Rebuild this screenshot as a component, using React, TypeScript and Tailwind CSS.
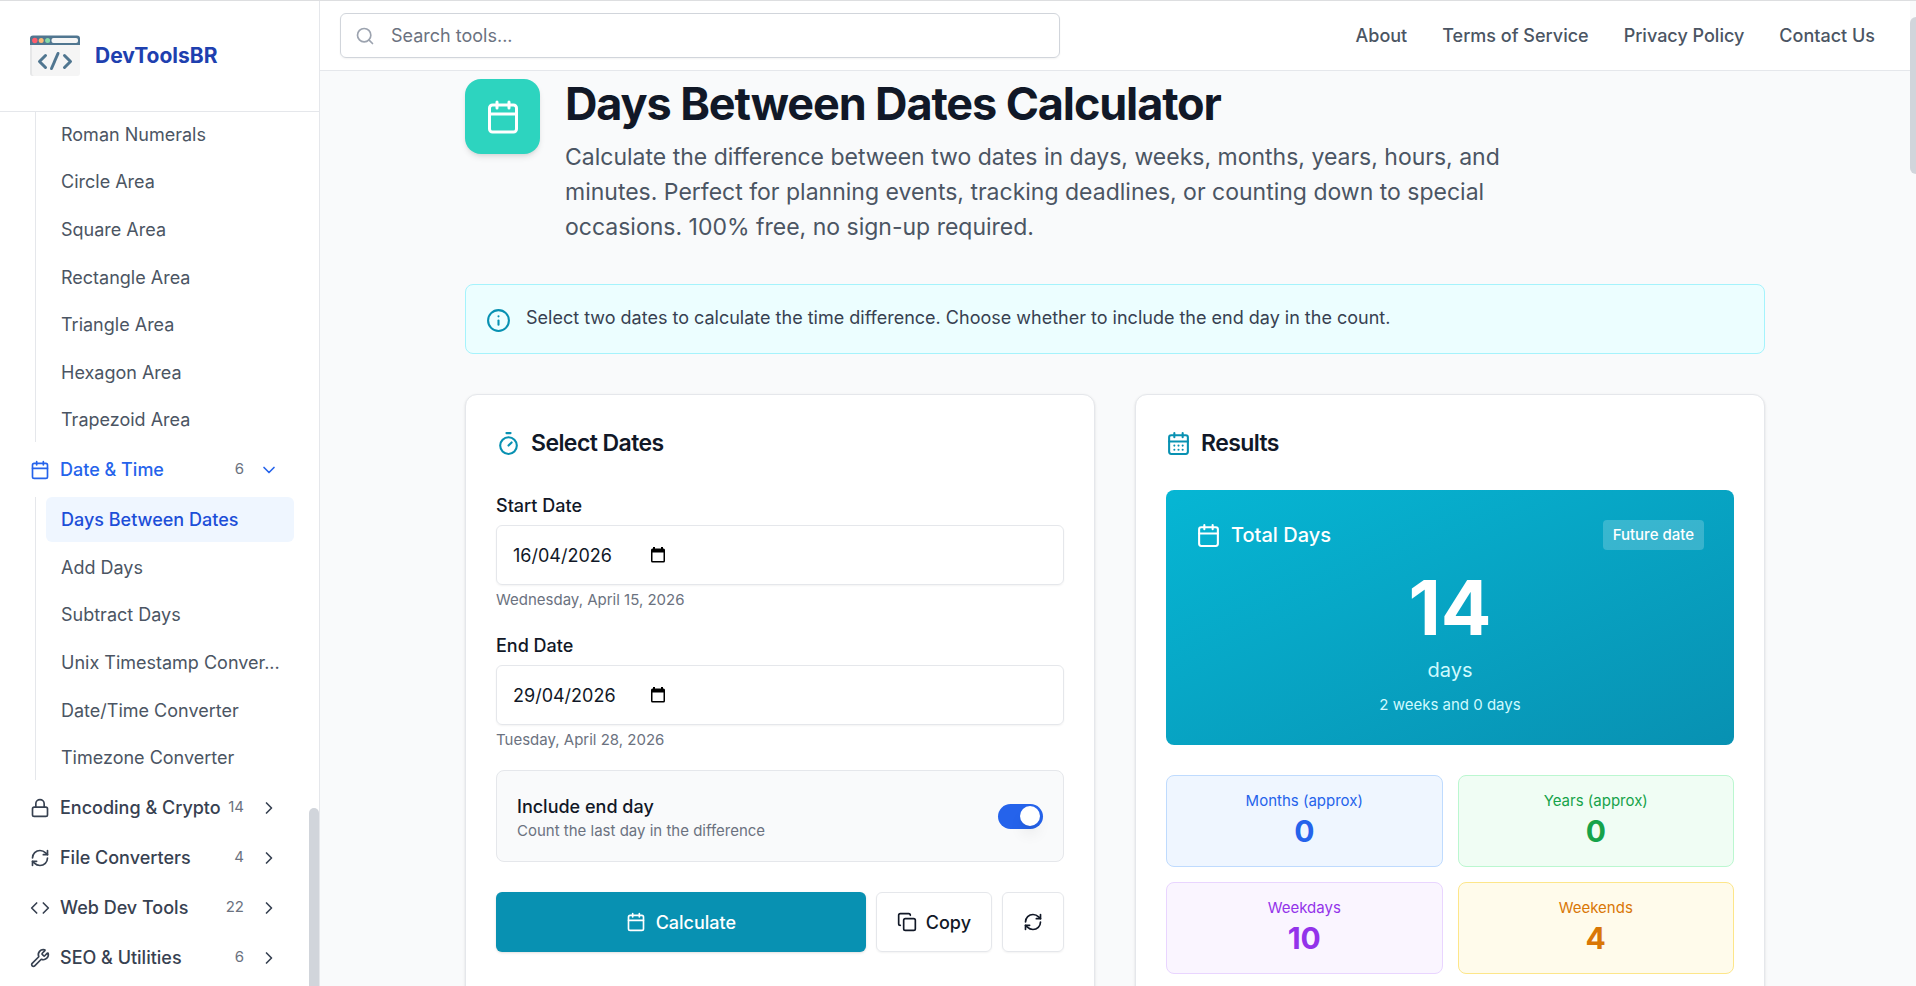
import {
  Calendar,
  CalendarDays,
  ChevronDown,
  ChevronRight,
  Code,
  Copy,
  Info,
  Lock,
  RefreshCw,
  Search,
  Timer,
  Wrench,
  type LucideIcon,
} from "lucide-react";
import { useState } from "react";

const mathTools = [
  "Roman Numerals",
  "Circle Area",
  "Square Area",
  "Rectangle Area",
  "Triangle Area",
  "Hexagon Area",
  "Trapezoid Area",
];

const dateTools = [
  "Days Between Dates",
  "Add Days",
  "Subtract Days",
  "Unix Timestamp Conver...",
  "Date/Time Converter",
  "Timezone Converter",
];

const categories: { name: string; count: number; icon: LucideIcon }[] = [
  { name: "Encoding & Crypto", count: 14, icon: Lock },
  { name: "File Converters", count: 4, icon: RefreshCw },
  { name: "Web Dev Tools", count: 22, icon: Code },
  { name: "SEO & Utilities", count: 6, icon: Wrench },
];

const stats = [
  { label: "Months (approx)", value: 0, box: "bg-[#eff6ff] border-[#bfdbfe]", text: "text-[#2563eb]" },
  { label: "Years (approx)", value: 0, box: "bg-[#f0fdf4] border-[#bbf7d0]", text: "text-[#16a34a]" },
  { label: "Weekdays", value: 10, box: "bg-[#faf5ff] border-[#e9d5ff]", text: "text-[#9333ea]" },
  { label: "Weekends", value: 4, box: "bg-[#fffbeb] border-[#fde68a]", text: "text-[#d97706]" },
];

function Logo() {
  return (
    <svg viewBox="0 0 50 50" className="size-[50px] shrink-0" aria-hidden="true">
      <path d="M0 13h50v29a3 3 0 0 1-3 3H3a3 3 0 0 1-3-3z" fill="#f5f5f5" />
      <path d="M0 13h2v29c0 2 1 3 2 3H3a3 3 0 0 1-3-3z" fill="#e6e7e8" />
      <path d="M3 4.500h44a3 3 0 0 1 3 3V14H0V7.500a3 3 0 0 1 3-3z" fill="#507690" />
      <circle cx="4.800" cy="9.500" r="2.700" fill="#ff5d6c" />
      <circle cx="11.200" cy="9.500" r="2.500" fill="#fdba74" />
      <circle cx="17.600" cy="9.500" r="2.500" fill="#86dba8" />
      <rect x="21.500" y="7" width="26.500" height="5" rx="2" fill="#f5f5f5" />
      <g fill="none" stroke="#507690" strokeWidth="3" strokeLinecap="round" strokeLinejoin="round">
        <path d="M15.500 24.500 9.500 30.500l6 6" />
        <path d="M34.500 24.500l6 6-6 6" />
        <path d="M28 22.500 21.500 37.500" />
      </g>
    </svg>
  );
}

function ToolList({ tools, active, height }: { tools: string[]; active?: string; height: string }) {
  return (
    <ul className={`ml-[15px] flex flex-col gap-[3px] border-l border-[#e5e7eb] pl-[10px] ${height}`}>
      {tools.map((tool) => (
        <li key={tool} className="min-h-0 flex-1">
          <a
            href="#"
            className={`flex h-full items-center rounded-md pl-[15px] whitespace-nowrap ${
              tool === active ? "bg-[#eff6ff] font-medium text-[#1d4ed8]" : "text-[#4b5563]"
            }`}
          >
            {tool}
          </a>
        </li>
      ))}
    </ul>
  );
}

function Category({ name, count, icon: Icon, open }: { name: string; count: number; icon: LucideIcon; open?: boolean }) {
  const Chevron = open ? ChevronDown : ChevronRight;
  return (
    <button
      type="button"
      aria-expanded={!!open}
      className={`flex h-[45px] w-full items-center pl-[10px] pr-[15px] font-medium ${
        open ? "text-[#2563eb]" : "text-[#374151]"
      }`}
    >
      <Icon size={20} strokeWidth={2} className="mr-[10px] shrink-0" />
      <span className="flex-1 truncate text-left">{name}</span>
      <span className="mr-[15px] text-[15px] font-normal text-[#6b7280]">{count}</span>
      <Chevron size={20} strokeWidth={2} className="shrink-0" />
    </button>
  );
}

function Sidebar() {
  return (
    <aside className="relative flex w-[320px] shrink-0 flex-col overflow-hidden border-r border-[#e5e7eb] bg-white">
      <div className="flex h-[111px] shrink-0 items-center gap-[15px] border-b border-[#e5e7eb] px-[30px]">
        <Logo />
        <a href="#" className="text-[21px] font-bold text-[#1e40af]">
          DevToolsBR
        </a>
      </div>
      <nav className="flex flex-col gap-[5px] pl-5 pr-[25px] text-[18px]">
        <ToolList tools={mathTools} height="h-[330px]" />
        <Category name="Date & Time" count={6} icon={Calendar} open />
        <ToolList tools={dateTools} active="Days Between Dates" height="h-[283px]" />
        {categories.map((category) => (
          <Category key={category.name} {...category} />
        ))}
      </nav>
      <div className="absolute right-0 bottom-0 h-[178px] w-[10px] rounded-t-full bg-[#d1d5db]" />
    </aside>
  );
}

function TopBar() {
  return (
    <header className="flex h-[70px] shrink-0 items-center justify-between border-b border-[#e5e7eb] bg-white pl-5 pr-[35px]">
      <label className="flex h-[45px] w-[720px] items-center gap-4 rounded-md border border-[#d1d5db] px-[14px] shadow-xs">
        <Search size={20} className="shrink-0 text-[#9ca3af]" />
        <input
          type="search"
          aria-label="Search tools"
          placeholder="Search tools..."
          className="w-full bg-transparent text-[18px] outline-none placeholder:text-[#6b7280]"
        />
      </label>
      <nav className="flex gap-[35px] text-[18px] font-medium text-[#4b5563]">
        <a href="#">About</a>
        <a href="#">Terms of Service</a>
        <a href="#">Privacy Policy</a>
        <a href="#">Contact Us</a>
      </nav>
    </header>
  );
}

function DateField({ id, label, initial, hint }: { id: string; label: string; initial: string; hint: string }) {
  const [value, setValue] = useState(initial);
  return (
    <div>
      <label htmlFor={id} className="block text-[18px] leading-[18px] font-medium text-[#111827]">
        {label}
      </label>
      <div className="mt-[10px] flex h-[60px] items-center rounded-md border border-[#e5e7eb] px-4 shadow-xs">
        <input
          id={id}
          value={value}
          onChange={(e) => setValue(e.target.value)}
          className="w-[137px] text-[18px] text-[#111827] outline-none"
        />
        <button type="button" aria-label={`Open ${label} picker`}>
          <svg viewBox="0 0 16 18" className="h-[18px] w-4" aria-hidden="true">
            <path
              fill="#000"
              fillRule="evenodd"
              d="M3 1h2v1.500h6V1h2v1.500h.5A1.500 1.500 0 0 1 15 4v11a1.500 1.500 0 0 1-1.500 1.500h-11A1.500 1.500 0 0 1 1 15V4a1.500 1.500 0 0 1 1.500-1.500H3zM2.500 6.500V15h11V6.500z"
            />
          </svg>
        </button>
      </div>
      <p className="mt-[5px] text-[15px] leading-5 text-[#6b7280]">{hint}</p>
    </div>
  );
}

function SelectDates() {
  return (
    <section className="rounded-xl border border-[#e5e7eb] bg-white p-[30px] shadow-sm">
      <h2 className="mt-[3px] flex items-center gap-[10px] text-[23px] leading-[30px] font-semibold tracking-tight text-[#111827]">
        <Timer size={25} strokeWidth={2} className="text-[#0891b2]" />
        Select Dates
      </h2>
      <div className="mt-[39px] flex flex-col gap-[27px]">
        <DateField id="start" label="Start Date" initial="16/04/2026" hint="Wednesday, April 15, 2026" />
        <DateField id="end" label="End Date" initial="29/04/2026" hint="Tuesday, April 28, 2026" />
      </div>
      <div className="mt-5 flex h-[92px] items-center justify-between rounded-lg border border-[#e5e7eb] bg-[#f9fafb] px-5">
        <label htmlFor="include-end" className="pt-[6px] text-[18px] leading-6 font-medium text-[#111827]">
          Include end day
          <span className="block text-[15px] font-normal text-[#6b7280]">Count the last day in the difference</span>
        </label>
        <input
          id="include-end"
          type="checkbox"
          role="switch"
          defaultChecked
          className="flex h-[25px] w-[45px] appearance-none items-center rounded-full bg-[#d1d5db] px-[3px] before:size-5 before:rounded-full before:bg-white before:shadow-lg checked:justify-end checked:bg-[#2563eb]"
        />
      </div>
      <div className="mt-[30px] flex h-[60px] gap-[10px] text-[18px] font-medium">
        <button
          type="button"
          className="flex flex-1 items-center justify-center gap-[10px] rounded-md bg-[#0891b2] text-white shadow-sm"
        >
          <Calendar size={20} />
          Calculate
        </button>
        <button
          type="button"
          className="flex items-center gap-[9px] rounded-md border border-[#e5e7eb] px-5 text-[#111827] shadow-xs"
        >
          <Copy size={20} />
          Copy
        </button>
        <button
          type="button"
          aria-label="Reset"
          className="flex w-[62px] items-center justify-center rounded-md border border-[#e5e7eb] text-[#111827] shadow-xs"
        >
          <RefreshCw size={20} />
        </button>
      </div>
    </section>
  );
}

function Results() {
  return (
    <section className="rounded-xl border border-[#e5e7eb] bg-white p-[30px] shadow-sm">
      <h2 className="mt-[3px] flex items-center gap-[10px] text-[23px] leading-[30px] font-semibold tracking-tight text-[#111827]">
        <CalendarDays size={25} strokeWidth={2} className="text-[#0891b2]" />
        Results
      </h2>
      <div className="mt-8 h-[255px] rounded-lg bg-linear-to-br from-[#06b6d4] to-[#0891b2] p-[30px] text-center text-white">
        <div className="flex items-center justify-between">
          <h3 className="flex items-center gap-[10px] text-[20px] leading-[30px] font-medium">
            <Calendar size={25} />
            Total Days
          </h3>
          <span className="rounded-sm bg-white/20 px-[10px] text-[15px] leading-[30px] font-medium">Future date</span>
        </div>
        <p className="mt-5 text-[75px] leading-[75px] font-bold">14</p>
        <p className="mt-[10px] text-[20px] leading-[30px] text-[#cffafe]">days</p>
        <p className="mt-[10px] text-[15px] leading-5 text-[#cffafe]">2 weeks and 0 days</p>
      </div>
      <div className="mt-[30px] grid grid-cols-2 gap-[15px]">
        {stats.map((stat) => (
          <div key={stat.label} className={`h-[92px] rounded-lg border pt-[15px] text-center ${stat.box} ${stat.text}`}>
            <p className="text-[15px] leading-5">{stat.label}</p>
            <p className="text-[30px] leading-10 font-bold">{stat.value}</p>
          </div>
        ))}
      </div>
    </section>
  );
}

export default function App() {
  return (
    <div className="relative flex h-screen overflow-hidden border-t border-[#dddee0] bg-[#f9fafb] font-['Inter',sans-serif] text-[#111827]">
      <Sidebar />
      <div className="flex min-w-0 flex-1 flex-col pr-[6px]">
        <TopBar />
        <main className="min-h-0 flex-1 overflow-hidden">
          <div className="mx-auto max-w-[1300px] pt-2">
            <div className="flex items-start gap-[25px]">
              <div className="flex size-[75px] shrink-0 items-center justify-center rounded-2xl bg-[#2dd4bf] text-white shadow-md">
                <Calendar size={36} strokeWidth={2} />
              </div>
              <div>
                <h1 className="text-[45px] leading-[50px] font-bold tracking-tight">Days Between Dates Calculator</h1>
                <p className="mt-[11px] max-w-[960px] text-[23px] leading-[35px] text-[#4b5563]">
                  Calculate the difference between two dates in days, weeks, months, years, hours, and minutes. Perfect
                  for planning events, tracking deadlines, or counting down to special occasions. 100% free, no sign-up
                  required.
                </p>
              </div>
            </div>
            <div className="mt-[39px] flex h-[70px] gap-[15px] rounded-lg border border-[#a5f3fc] bg-[#ecfeff] px-5 pt-5">
              <Info size={25} strokeWidth={2} className="mt-[3px] shrink-0 text-[#0891b2]" />
              <p className="text-[18px] leading-[26px] text-[#374151]">
                Select two dates to calculate the time difference. Choose whether to include the end day in the count.
              </p>
            </div>
            <div className="mt-10 grid grid-cols-2 gap-10 pb-10">
              <SelectDates />
              <Results />
            </div>
          </div>
        </main>
      </div>
      <div className="absolute top-4 right-0 h-[157px] w-[6px] rounded-l-full bg-[#d1d5db]" />
    </div>
  );
}
